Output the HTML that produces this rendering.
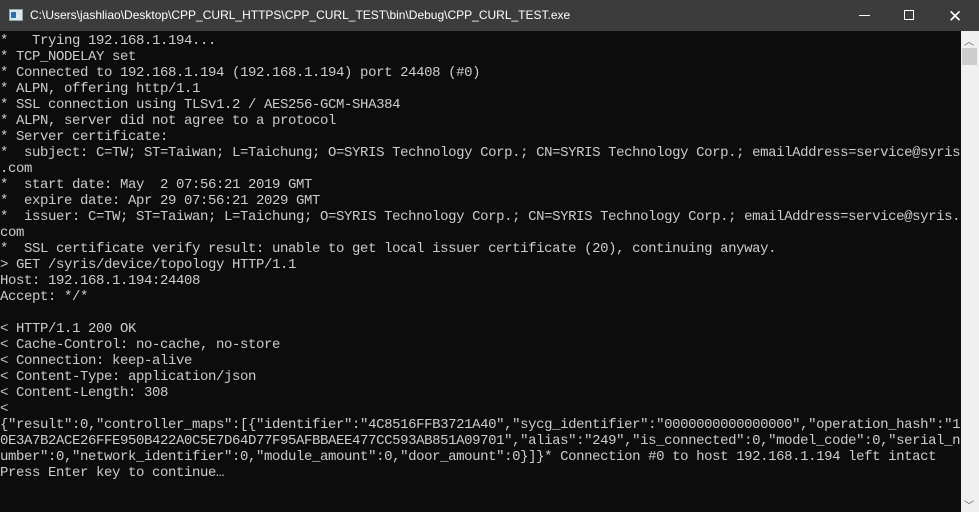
<!DOCTYPE html>
<html><head><meta charset="utf-8"><style>
*{margin:0;padding:0;box-sizing:border-box}
body{width:979px;height:512px;overflow:hidden;background:#0c0c0c;position:relative;font-family:"Liberation Sans",sans-serif}
.tb{position:absolute;left:0;top:0;width:979px;height:31px;background:#3c3c3c;color:#fff;font-size:12px}
.tb .t{position:absolute;left:30px;top:8px;white-space:nowrap}
.ic{position:absolute;left:9px;top:9px;width:14px;height:12px;background:#dfe7ee;border:1px solid #8aa}
.ic:after{content:"";position:absolute;left:1px;top:2px;width:5px;height:6px;background:#2f6fa8}
.min{position:absolute;left:859px;top:15px;width:11px;height:1px;background:#fff}
.max{position:absolute;left:904px;top:10px;width:10px;height:10px;border:1px solid #fff}
.cl{position:absolute;left:948px;top:7px;color:#fff;font-size:17px}
.con{position:absolute;left:0;top:33px;width:961px;height:479px;color:#cccccc;font-family:"Liberation Mono",monospace;font-size:14px;letter-spacing:-0.4px;line-height:16px;white-space:pre}
.sb{position:absolute;left:961px;top:31px;width:18px;height:481px;background:#f0f0f0}
.th{position:absolute;left:962px;top:48px;width:15px;height:17px;background:#cdcdcd}
.ar{position:absolute;left:964px;color:#606060;font-size:10px}
</style></head><body>
<div class="tb"><div class="ic"></div><div class="t">C:\Users\jashliao\Desktop\CPP_CURL_HTTPS\CPP_CURL_TEST\bin\Debug\CPP_CURL_TEST.exe</div>
<div class="min"></div><div class="max"></div><div class="cl">✕</div></div>
<div class="con">*   Trying 192.168.1.194...
* TCP_NODELAY set
* Connected to 192.168.1.194 (192.168.1.194) port 24408 (#0)
* ALPN, offering http/1.1
* SSL connection using TLSv1.2 / AES256-GCM-SHA384
* ALPN, server did not agree to a protocol
* Server certificate:
*  subject: C=TW; ST=Taiwan; L=Taichung; O=SYRIS Technology Corp.; CN=SYRIS Technology Corp.; emailAddress=service@syris
.com
*  start date: May  2 07:56:21 2019 GMT
*  expire date: Apr 29 07:56:21 2029 GMT
*  issuer: C=TW; ST=Taiwan; L=Taichung; O=SYRIS Technology Corp.; CN=SYRIS Technology Corp.; emailAddress=service@syris.
com
*  SSL certificate verify result: unable to get local issuer certificate (20), continuing anyway.
&gt; GET /syris/device/topology HTTP/1.1
Host: 192.168.1.194:24408
Accept: */*

&lt; HTTP/1.1 200 OK
&lt; Cache-Control: no-cache, no-store
&lt; Connection: keep-alive
&lt; Content-Type: application/json
&lt; Content-Length: 308
&lt;
{"result":0,"controller_maps":[{"identifier":"4C8516FFB3721A40","sycg_identifier":"0000000000000000","operation_hash":"1
0E3A7B2ACE26FFE950B422A0C5E7D64D77F95AFBBAEE477CC593AB851A09701","alias":"249","is_connected":0,"model_code":0,"serial_n
umber":0,"network_identifier":0,"module_amount":0,"door_amount":0}]}* Connection #0 to host 192.168.1.194 left intact
Press Enter key to continue…</div>
<div class="sb"></div><div class="th"></div>
<div class="ar" style="top:33px">︿</div><div class="ar" style="top:497px">﹀</div>
</body></html>
